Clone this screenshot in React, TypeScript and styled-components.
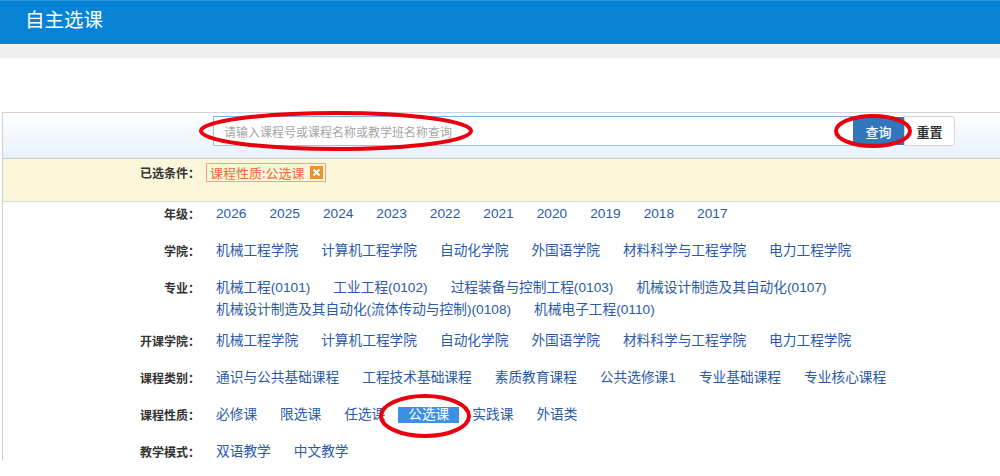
import React from "react";
import styled, { createGlobalStyle } from "styled-components";

const GlobalStyle = createGlobalStyle`
  html, body { margin: 0; padding: 0; background: #fff; }
  body { font-family: "Liberation Sans", "Noto Sans CJK SC", sans-serif; }
  * { box-sizing: border-box; }
`;

const Page = styled.div`
  position: relative;
  width: 1000px;
  height: 476px;
  overflow: hidden;
`;

const Header = styled.header`
  height: 44px;
  background: #0683d4;
  border-top: 1px solid #2f93de;
  display: flex;
  align-items: center;
  padding-left: 25px;
`;

const Title = styled.h1`
  margin: 0;
  font-family: "Noto Sans CJK SC", sans-serif;
  font-size: 19.5px;
  font-weight: 400;
  color: #fff;
  line-height: 1;
  margin-top: -7px;
`;

const Strip = styled.div`
  height: 14px;
  background: #f0f0f0;
`;

const Spacer = styled.div`
  height: 54px;
`;

const Panel = styled.section`
  margin-left: 2px;
  border-left: 1px solid #cfcfcf;
  border-top: 1px solid #cfd4d9;
`;

const SearchBar = styled.div`
  height: 46px;
  padding: 3px 0 0 210px;
  background: linear-gradient(#ffffff, #e7f1fb);
  border-bottom: 1px solid #c9ced3;
  display: flex;
  align-items: flex-start;
`;

const SearchInput = styled.input`
  width: 640px;
  height: 30px;
  border: 1px solid #9cc4ea;
  border-top-color: #7fb2e2;
  border-right: none;
  padding: 0 10px;
  font-family: "Noto Sans CJK SC", sans-serif;
  font-size: 12px;
  outline: none;
  &::placeholder { color: #a5a5a5; }
`;

const Button = styled.button<{ $primary?: boolean }>`
  width: 51px;
  height: 30px;
  margin: 0;
  padding: 0;
  font-family: "Noto Sans CJK SC", sans-serif;
  font-size: 13px;
  cursor: pointer;
  border: 1px solid ${(p) => (p.$primary ? "#2f77bd" : "#d6d6d6")};
  background: ${(p) => (p.$primary ? "#3077be" : "#fff")};
  color: ${(p) => (p.$primary ? "#fff" : "#333")};
  font-weight: ${(p) => (p.$primary ? 500 : 700)};
  border-radius: ${(p) => (p.$primary ? "0" : "0 3px 3px 0")};
  ${(p) => (p.$primary ? "height: 28px; margin-top: 1px;" : "")}
`;

const CondBar = styled.div`
  height: 43px;
  background: #fcf6da;
  border-bottom: 1px solid #d8d8d8;
  display: grid;
  grid-template-columns: 197px auto;
  column-gap: 6px;
  align-items: start;
  padding-top: 4px;
`;

const Label = styled.div`
  text-align: right;
  font-family: "Noto Sans CJK SC", sans-serif;
  font-size: 12px;
  font-weight: 700;
  color: #333;
  line-height: 16px;
`;

const CondLabel = styled(Label)`
  line-height: 19px;
`;

const Tag = styled.span`
  display: inline-flex;
  align-items: center;
  height: 19px;
  border: 1px solid #f2a27f;
  padding: 0 2px 0 3px;
  gap: 5px;
  font-family: "Noto Sans CJK SC", sans-serif;
  font-size: 13px;
  color: #ef6a36;
  line-height: 1;
`;

const TagClose = styled.span`
  width: 13px;
  height: 13px;
  background: #e3982a;
  display: inline-flex;
  align-items: center;
  justify-content: center;
`;

const Rows = styled.div`
  padding-top: 4px;
`;

const Row = styled.div<{ $tight?: boolean }>`
  display: grid;
  grid-template-columns: 197px 1fr;
  column-gap: 6px;
  align-items: start;
  margin-bottom: ${(p) => (p.$tight ? "15px" : "21px")};
`;

const Items = styled.div`
  display: flex;
  flex-wrap: wrap;
  column-gap: 3px;
  row-gap: 6px;
`;

const Item = styled.a<{ $active?: boolean }>`
  display: inline-block;
  padding: 0 10px;
  line-height: 16px;
  font-size: 13.7px;
  color: ${(p) => (p.$active ? "#fff" : "#2b5ba7")};
  background: ${(p) => (p.$active ? "#3d8fe4" : "transparent")};
  text-decoration: none;
  white-space: nowrap;
  cursor: pointer;
`;

const Marks = styled.svg`
  position: absolute;
  left: 0;
  top: 0;
  pointer-events: none;
`;

const colleges = ["机械工程学院", "计算机工程学院", "自动化学院", "外国语学院", "材料科学与工程学院", "电力工程学院"];

const rows: { label: string; items: string[]; active?: string; tight?: boolean }[] = [
  { label: "年级：", items: ["2026", "2025", "2024", "2023", "2022", "2021", "2020", "2019", "2018", "2017"] },
  { label: "学院：", items: colleges },
  {
    label: "专业：",
    items: [
      "机械工程(0101)",
      "工业工程(0102)",
      "过程装备与控制工程(0103)",
      "机械设计制造及其自动化(0107)",
      "机械设计制造及其自动化(流体传动与控制)(0108)",
      "机械电子工程(0110)",
    ],
    tight: true,
  },
  { label: "开课学院：", items: colleges },
  { label: "课程类别：", items: ["通识与公共基础课程", "工程技术基础课程", "素质教育课程", "公共选修课1", "专业基础课程", "专业核心课程"] },
  { label: "课程性质：", items: ["必修课", "限选课", "任选课", "公选课", "实践课", "外语类"], active: "公选课" },
  { label: "教学模式：", items: ["双语教学", "中文教学"] },
];

export default function App() {
  return (
    <Page>
      <GlobalStyle />
      <Header>
        <Title>自主选课</Title>
      </Header>
      <Strip />
      <Spacer />
      <Panel>
        <SearchBar>
          <SearchInput placeholder="请输入课程号或课程名称或教学班名称查询" />
          <Button $primary>查询</Button>
          <Button>重置</Button>
        </SearchBar>
        <CondBar>
          <CondLabel>已选条件：</CondLabel>
          <div>
            <Tag>
              课程性质:公选课
              <TagClose>
                <svg width="9" height="9" viewBox="0 0 9 9">
                  <path d="M1.5 1.5 L7.5 7.5 M7.5 1.5 L1.5 7.5" stroke="#fff" strokeWidth="2" />
                </svg>
              </TagClose>
            </Tag>
          </div>
        </CondBar>
        <Rows>
          {rows.map((r) => (
            <Row key={r.label} $tight={r.tight}>
              <Label>{r.label}</Label>
              <Items>
                {r.items.map((it) => (
                  <Item key={it} $active={r.active === it}>
                    {it}
                  </Item>
                ))}
              </Items>
            </Row>
          ))}
        </Rows>
      </Panel>
      <Marks width="1000" height="476" viewBox="0 0 1000 476">
        <ellipse cx="336" cy="131" rx="135" ry="18" fill="none" stroke="#e8000f" strokeWidth="4" />
        <ellipse cx="873" cy="131" rx="37" ry="15" fill="none" stroke="#e8000f" strokeWidth="4" />
        <ellipse cx="425" cy="416" rx="44" ry="20" fill="none" stroke="#e8000f" strokeWidth="4" />
      </Marks>
    </Page>
  );
}
